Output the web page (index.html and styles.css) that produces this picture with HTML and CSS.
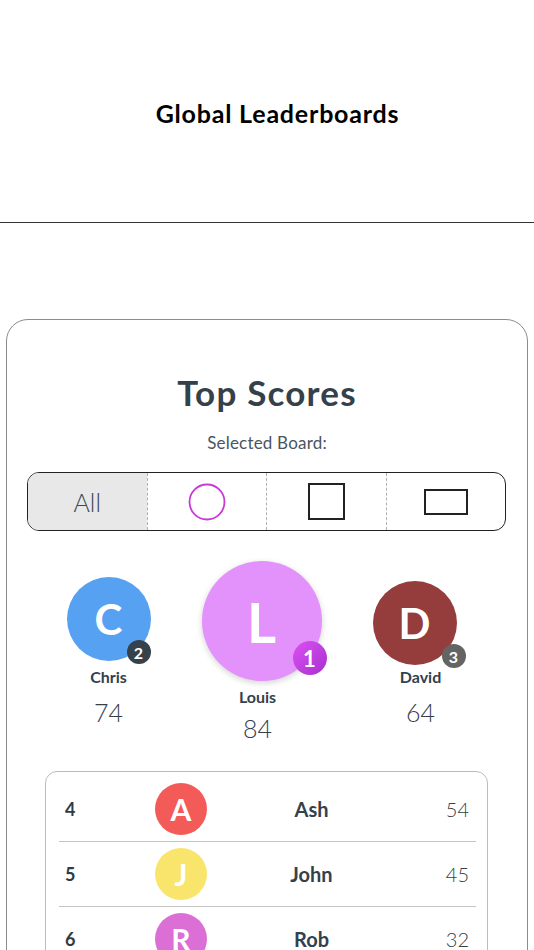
FILE: index.html
```html
<!DOCTYPE html>
<html lang="en">
<head>
<meta charset="utf-8">
<title>Global Leaderboards</title>
<link rel="stylesheet" href="styles.css">
</head>
<body>
<header class="topbar">
  <h1 class="topbar-title">Global Leaderboards</h1>
</header>

<main class="card">
  <h2 class="card-title">Top Scores</h2>
  <p class="card-sub">Selected Board:</p>

  <div class="segments">
    <div class="seg seg-active"><span class="seg-label">All</span></div>
    <div class="seg">
      <svg width="38" height="38" viewBox="0 0 38 38"><circle cx="19" cy="19" r="17.5" fill="none" stroke="#c93ad9" stroke-width="1.8"/></svg>
    </div>
    <div class="seg">
      <svg width="37" height="37" viewBox="0 0 37 37"><rect x="1" y="1" width="35" height="35" fill="none" stroke="#222" stroke-width="2"/></svg>
    </div>
    <div class="seg">
      <svg width="44" height="26" viewBox="0 0 44 26"><rect x="1" y="1" width="42" height="24" fill="none" stroke="#222" stroke-width="2"/></svg>
    </div>
  </div>

  <div class="podium">
    <div class="pod pod-side">
      <div class="avatar avatar-md av-blue">C<span class="badge badge-sm badge-2">2</span></div>
      <div class="pod-name">Chris</div>
      <div class="pod-score">74</div>
    </div>
    <div class="pod pod-first">
      <div class="avatar avatar-lg av-pink">L<span class="badge badge-lg badge-1">1</span></div>
      <div class="pod-name pod-text-first">Louis</div>
      <div class="pod-score pod-score-first pod-text-first">84</div>
    </div>
    <div class="pod pod-side pod-third">
      <div class="avatar avatar-md av-red avatar-third">D<span class="badge badge-sm badge-3">3</span></div>
      <div class="pod-name pod-text-third pod-name-third">David</div>
      <div class="pod-score pod-text-third">64</div>
    </div>
  </div>

  <div class="list">
    <div class="row">
      <span class="rank">4</span>
      <span class="avatar avatar-sm av-coral">A</span>
      <span class="name">Ash</span>
      <span class="score">54</span>
    </div>
    <div class="row">
      <span class="rank">5</span>
      <span class="avatar avatar-sm av-yellow">J</span>
      <span class="name">John</span>
      <span class="score">45</span>
    </div>
    <div class="row">
      <span class="rank">6</span>
      <span class="avatar avatar-sm av-orchid">R</span>
      <span class="name">Rob</span>
      <span class="score">32</span>
    </div>
  </div>
</main>
</body>
</html>
```

FILE: styles.css
```css
* { box-sizing: border-box; }

html, body {
  margin: 0;
  padding: 0;
  background: #ffffff;
}

body {
  font-family: "Lato", "DejaVu Sans", sans-serif;
  color: #34414b;
  width: 534px;
  overflow-x: hidden;
}

.topbar {
  height: 223px;
  border-bottom: 1px solid #333;
  display: flex;
  align-items: flex-start;
  justify-content: center;
  padding-left: 21px;
}

.topbar-title {
  margin: 99px 0 0 0;
  font-size: 25px;
  line-height: 28px;
  font-weight: 700;
  color: #000;
  letter-spacing: 0.8px;
}

.card {
  margin: 96px 6px 0 6px;
  border: 1px solid #8c8c8c;
  border-radius: 22px;
  padding: 52px 0 40px 0;
}

.card-title {
  margin: 0;
  text-align: center;
  font-size: 35px;
  line-height: 40px;
  font-weight: 700;
  color: #34414b;
  letter-spacing: 1.2px;
}

.card-sub {
  margin: 21px 0 0 0;
  text-align: center;
  font-size: 17px;
  line-height: 20px;
  font-weight: 400;
  color: #4a5560;
  letter-spacing: 0.2px;
}

.segments {
  margin: 19px 21px 0 20px;
  height: 59px;
  border: 1.5px solid #222;
  border-radius: 12px;
  overflow: hidden;
  display: flex;
}

.seg {
  flex: 1;
  display: flex;
  align-items: center;
  justify-content: center;
  border-left: 1px dashed #b0b0b0;
}

.seg:first-child { border-left: none; }

.seg-active { background: #e8e8e8; }

.seg-label {
  font-size: 25px;
  font-weight: 300;
  color: #3d4852;
}

.podium {
  margin-top: 30px;
  padding-left: 25px;
  display: grid;
  grid-template-columns: 153px 153px 153px;
  align-items: start;
}

.pod {
  display: flex;
  flex-direction: column;
  align-items: center;
}

.pod-side { margin-top: 16px; }

.avatar {
  position: relative;
  border-radius: 50%;
  color: #fff;
  font-weight: 700;
  display: flex;
  align-items: center;
  justify-content: center;
}

.avatar-md {
  width: 84px;
  height: 84px;
  font-size: 42px;
}

.avatar-third { margin-top: 4px; }

.avatar-lg {
  width: 120px;
  height: 120px;
  font-size: 56px;
  box-shadow: 0 2px 6px rgba(0, 0, 0, 0.18);
}

.avatar-sm {
  width: 52px;
  height: 52px;
  font-size: 30px;
}

.av-blue { background: #56a1f1; }
.av-pink { background: #e392fb; }
.av-red { background: #953c3c; }
.av-coral { background: #f35b59; }
.av-yellow { background: #f9e56c; }
.av-orchid { background: #dc6fd6; }

.badge {
  position: absolute;
  border-radius: 50%;
  color: #fff;
  font-weight: 700;
  display: flex;
  align-items: center;
  justify-content: center;
}

.badge-sm {
  width: 24px;
  height: 24px;
  font-size: 16px;
  bottom: -3px;
}

.badge-2 { background: #35424c; right: 0px; }
.badge-3 { background: #646464; right: -9px; }

.badge-lg {
  width: 34px;
  height: 34px;
  font-size: 22px;
  right: -5px;
  bottom: 6px;
  background: linear-gradient(135deg, #dd50f2 0%, #a531cf 100%);
}

.pod-name {
  margin-top: 6px;
  font-size: 16px;
  line-height: 20px;
  font-weight: 700;
  color: #34414b;
}

.pod-name-third { margin-top: 2px; }

.pod-text-first { margin-right: 8px; }
.pod-text-third { margin-left: 12px; }

.pod-score {
  margin-top: 10px;
  font-size: 25px;
  line-height: 30px;
  font-weight: 300;
  color: #34414b;
}

.pod-score-first { margin-top: 6px; }

.list {
  margin: 28px 39px 0 38px;
  border: 1px solid #bcbcbc;
  border-radius: 12px;
  padding: 5px 11px 0 13px;
}

.row {
  height: 65px;
  border-bottom: 1.5px solid #c4c4c4;
  display: grid;
  grid-template-columns: 96px 52px 1fr 60px;
  align-items: center;
}

.rank {
  padding-left: 6px;
  font-size: 18px;
  font-weight: 700;
  color: #2f3b45;
}

.name {
  text-align: center;
  font-size: 20px;
  font-weight: 700;
  color: #34414b;
}

.score {
  text-align: right;
  padding-right: 7px;
  font-size: 20px;
  font-weight: 300;
  color: #34414b;
}
```
